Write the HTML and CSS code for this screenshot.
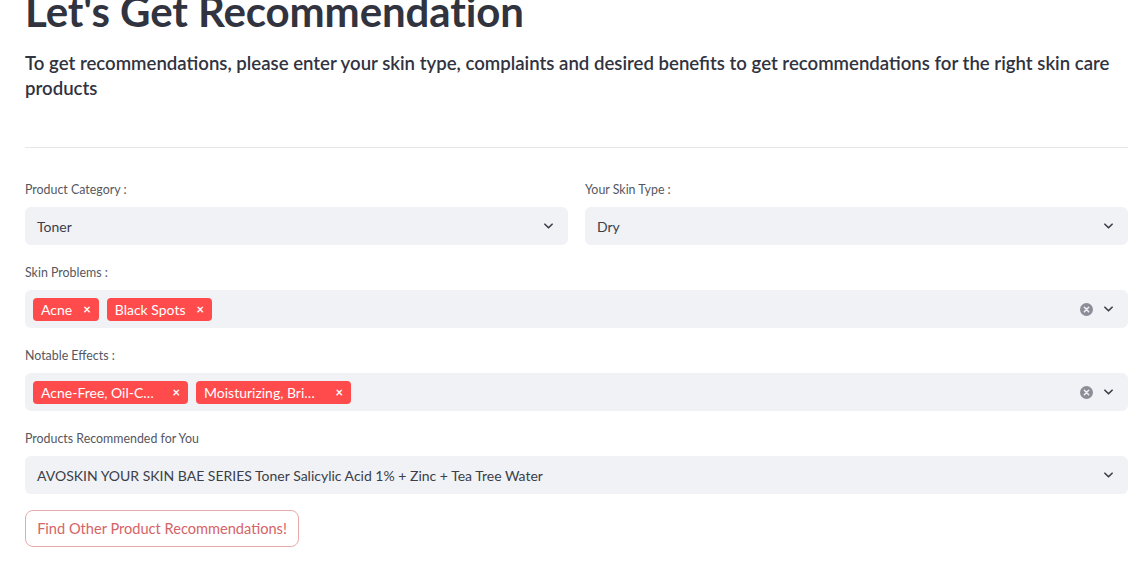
FILE: index.html
```html
<!DOCTYPE html>
<html>
<head>
<meta charset="utf-8">
<link rel="stylesheet" href="styles.css">
</head>
<body>
<main class="page">
  <h1 class="title">Let's Get Recommendation</h1>
  <p class="intro">To get recommendations, please enter your skin type, complaints and desired benefits to get recommendations for the right skin care products</p>
  <hr class="divider">
  <div class="row">
    <div class="field">
      <label class="label">Product Category :</label>
      <div class="select"><span class="value">Toner</span>
        <span class="icons"><svg class="chev" viewBox="0 0 10 6"><path d="M1 1l4 4 4-4"/></svg></span></div>
    </div>
    <div class="field">
      <label class="label">Your Skin Type :</label>
      <div class="select"><span class="value">Dry</span>
        <span class="icons"><svg class="chev" viewBox="0 0 10 6"><path d="M1 1l4 4 4-4"/></svg></span></div>
    </div>
  </div>
  <div class="field">
    <label class="label">Skin Problems :</label>
    <div class="select multi">
      <span class="tags">
        <span class="tag">Acne <span class="x">×</span></span>
        <span class="tag">Black Spots <span class="x">×</span></span>
      </span>
      <span class="icons">
        <svg class="clear" viewBox="0 0 12 12"><circle cx="6" cy="6" r="6"/><path d="M4 4l4 4M8 4l-4 4"/></svg>
        <svg class="chev" viewBox="0 0 10 6"><path d="M1 1l4 4 4-4"/></svg>
      </span>
    </div>
  </div>
  <div class="field">
    <label class="label">Notable Effects :</label>
    <div class="select multi">
      <span class="tags">
        <span class="tag wide">Acne-Free, Oil-C… <span class="x">×</span></span>
        <span class="tag wide">Moisturizing, Bri… <span class="x">×</span></span>
      </span>
      <span class="icons">
        <svg class="clear" viewBox="0 0 12 12"><circle cx="6" cy="6" r="6"/><path d="M4 4l4 4M8 4l-4 4"/></svg>
        <svg class="chev" viewBox="0 0 10 6"><path d="M1 1l4 4 4-4"/></svg>
      </span>
    </div>
  </div>
  <div class="field">
    <label class="label">Products Recommended for You</label>
    <div class="select"><span class="value">AVOSKIN YOUR SKIN BAE SERIES Toner Salicylic Acid 1% + Zinc + Tea Tree Water</span>
      <span class="icons"><svg class="chev" viewBox="0 0 10 6"><path d="M1 1l4 4 4-4"/></svg></span></div>
  </div>
  <button class="btn">Find Other Product Recommendations!</button>
</main>
</body>
</html>
```

FILE: styles.css
```css
* { box-sizing: border-box; }
html, body { margin: 0; background: #fff; }
body {
  font-family: "Lato", "Noto Sans", sans-serif;
  color: #31333f;
  overflow: hidden;
}
.page {
  padding: 0 16px 0 25px;
  width: 1144px;
  display: flex;
  flex-direction: column;
}
.title {
  margin: -14px 0 0;
  font-size: 42px;
  line-height: 50px;
  font-weight: 700;
  letter-spacing: -0.1px;
}
.intro {
  margin: 15px 0 0;
  font-size: 18.6px;
  line-height: 25px;
  font-weight: 600;
  width: 1103px;
}
.divider {
  border: none;
  border-top: 1px solid #e6e7ea;
  margin: 46px 0 0;
  width: 1103px;
}
.row {
  display: grid;
  grid-template-columns: 543px 543px;
  gap: 17px;
  margin-top: 34px;
}
.row .field { margin-top: 0; }
.field {
  display: flex;
  flex-direction: column;
  margin-top: 20px;
  width: 1103px;
}
.row .field { width: auto; }
.label {
  font-size: 12.4px;
  line-height: 16px;
  color: #55575f;
  margin-bottom: 9px;
}
.select {
  height: 38px;
  background: #f0f2f6;
  border-radius: 6px;
  display: flex;
  align-items: center;
  justify-content: space-between;
  padding: 0 15px 0 12px;
  font-size: 14px;
}
.select.multi { padding-left: 8px; }
.value { color: #3c3e48; }
.icons { display: flex; align-items: center; gap: 11px; }
.chev { width: 9px; height: 6px; }
.chev path { fill: none; stroke: #3c3e48; stroke-width: 1.8; stroke-linecap: round; stroke-linejoin: round; }
.clear { width: 13px; height: 13px; }
.clear circle { fill: #8c8d97; }
.clear path { stroke: #f0f2f6; stroke-width: 1.4; stroke-linecap: round; }
.tags { display: flex; gap: 8px; }
.tag {
  background: #ff4b4b;
  color: #fff;
  border-radius: 4px;
  height: 23px;
  padding: 0 8px 0 8px;
  display: flex;
  align-items: center;
  font-size: 14px;
}
.tag .x { font-size: 13px; margin-left: 11px; font-weight: 700; }
.tag.wide { width: 155px; justify-content: space-between; }
.btn {
  margin-top: 16px;
  align-self: flex-start;
  height: 37px;
  width: 274px;
  background: #fff;
  border: 1px solid #e8a9aa;
  border-radius: 8px;
  color: #d56467;
  font-family: inherit;
  font-size: 14.6px;
  padding: 0;
}
```
